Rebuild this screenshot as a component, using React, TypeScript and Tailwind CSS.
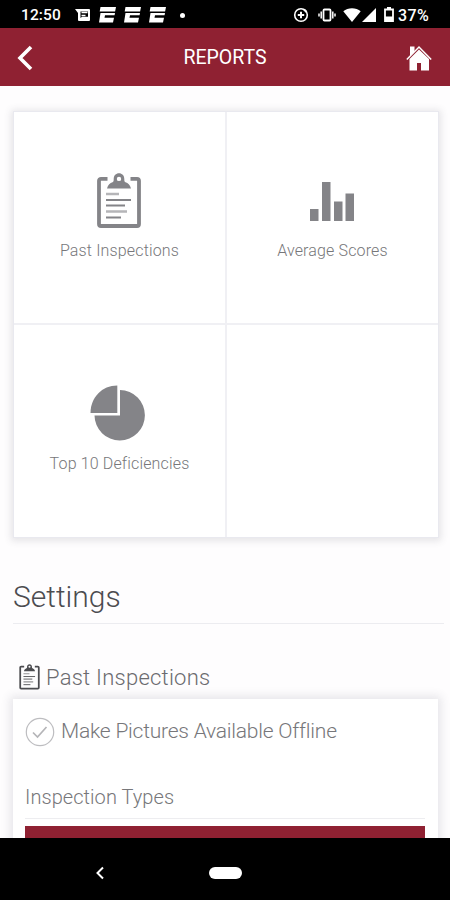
import type { ReactNode } from 'react';

function ClipboardIcon({ className }: { className?: string }) {
  return (
    <svg viewBox="0 0 44 56" fill="none" className={className}>
      <path d="M10.500 5.800H4a2 2 0 0 0-2 2V51a2 2 0 0 0 2 2h36a2 2 0 0 0 2-2V7.800a2 2 0 0 0-2-2h-6.500" stroke="currentColor" strokeWidth="3.800" />
      <path
        fill="currentColor"
        fillRule="evenodd"
        d="M10 15.500c1-3.700 3-5.200 5.500-6.200 1.200-.8 1.200-1.800 1.200-3.300C16.700 2.500 19 .3 22 .3S27.300 2.500 27.300 6c0 1.500 0 2.500 1.200 3.300 2.500 1 4.500 2.500 5.500 6.200ZM22 3.700a2.200 2.200 0 1 0 0 4.400 2.200 2.200 0 0 0 0-4.400Z"
      />
      <path d="M9 27h25M9 32.500h19M9 44.500h15" stroke="currentColor" strokeWidth="1.900" />
      <path d="M9 21h13M9 38.500h21" stroke="currentColor" strokeWidth="2.400" opacity=".6" />
    </svg>
  );
}

function BarsIcon() {
  return (
    <svg viewBox="0 0 44 40" fill="currentColor" className="h-[40px] w-[44px]">
      <path d="M0 28h8.500v12H0zM12 1h8.500v39H12zM24 20.500h8.500V40H24zM35.500 12.500H44V40h-8.500z" />
    </svg>
  );
}

function PieIcon() {
  return (
    <svg viewBox="0 0 56 56" fill="currentColor" className="mr-[2px] mb-[3px] h-[56px] w-[56px]">
      <path d="M27.300.5V28H.5C.5 12.500 12 .5 27.300.5Z" />
      <path d="M30 5v25.500H4.500A25.200 25.200 0 1 0 30 5Z" />
    </svg>
  );
}

function NoticeIcon() {
  return (
    <svg viewBox="0 0 16 12" className="h-[12px] w-[16px]">
      <path d="M6.500 3.500h6M6.500 6.500h4" stroke="#fff" strokeWidth="1.400" />
      <path
        fill="#fff"
        fillRule="evenodd"
        d="M0 0h14a1 1 0 0 1 1 1v10a1 1 0 0 1-1 1H4a1 1 0 0 1-1-1V4Zm5.500 2.500v6.500L7 7.800h6V2.500Z"
      />
    </svg>
  );
}

function EIcon() {
  return (
    <svg viewBox="0 0 17 16" fill="#fff" className="h-[16px] w-[17px]">
      <path d="M1.500 0H17l-.9 4.500H.7zM1.500 6H16l-.4 2.200H6l-.5 2.500H15l-1 4.800H0z" />
    </svg>
  );
}

function StatusBar() {
  return (
    <div className="flex h-[28px] shrink-0 items-center bg-black pt-[2px] pl-[21px] text-white">
      <span className="mt-px w-[54px] text-[15.500px] font-medium tracking-[0.1px]">12:50</span>
      <NoticeIcon />
      <div className="ml-[8px] flex gap-[8px]">
        <EIcon />
        <EIcon />
        <EIcon />
      </div>
      <span className="ml-[14px] h-[5px] w-[5px] rounded-full bg-white" />
      <svg viewBox="0 0 16 16" fill="none" stroke="#fff" className="ml-[108px] h-[16px] w-[16px]">
        <circle cx="8" cy="8" r="6.300" strokeWidth="1.600" />
        <path d="M8 4.800v6.400M4.800 8h6.400" strokeWidth="2" />
        <path d="M11 2.500l2.500 2.500" strokeWidth="2" />
      </svg>
      <svg viewBox="0 0 18 14" className="ml-[9px] h-[14px] w-[18px]">
        <rect x="5.500" y="1.500" width="7" height="11" rx="1" fill="none" stroke="#fff" strokeWidth="1.800" />
        <path d="M3.200 3.500v7M14.800 3.500v7M1 5.500v3M17 5.500v3" stroke="#fff" strokeWidth="1.500" />
      </svg>
      <svg viewBox="0 0 18 14" fill="#fff" className="ml-[7px] h-[14px] w-[18px]">
        <path d="M9 14 .3 3.200C5 -.7 13 -.7 17.700 3.200Z" />
      </svg>
      <svg viewBox="0 0 14 14" fill="#fff" className="ml-[1px] h-[14px] w-[14px]">
        <path d="M14 0v14H0z" />
      </svg>
      <svg viewBox="0 0 10 15" className="mb-px ml-[8px] h-[15px] w-[10px]">
        <path d="M1 2.500h8V14H1z" fill="none" stroke="#fff" strokeWidth="1.800" />
        <path d="M3 0h4v2H3zM1 9.500h8V14H1z" fill="#fff" />
      </svg>
      <span className="mt-px ml-[4px] text-[16px] font-medium tracking-[0.4px]">37%</span>
    </div>
  );
}

function Tile({ icon, label, className = '' }: { icon?: ReactNode; label?: string; className?: string }) {
  return (
    <div className={`flex flex-col items-center border-[#f0f0f4] text-[#848488] ${className}`}>
      <div className="mt-[60px] mr-[2px] flex h-[58px] items-center justify-center">{icon}</div>
      <span className="mt-[11px] text-[16px] leading-[20px] font-light tracking-[0.15px] text-[#77777a]">{label}</span>
    </div>
  );
}

export default function App() {
  return (
    <div className="flex h-[900px] w-[450px] flex-col overflow-hidden bg-[#fefdfe] font-['Roboto',sans-serif]">
      <StatusBar />

      <header className="flex h-[58px] shrink-0 items-center justify-between bg-[#8f2132] pr-[18px] pl-[17px] text-white">
        <svg viewBox="0 0 16 26" fill="none" stroke="#fff" strokeWidth="3.600" className="mt-[2px] h-[26px] w-[16px]">
          <path d="M14 2 3 13l11 11" />
        </svg>
        <h1 className="mt-[2px] ml-[11px] text-[19.500px]">REPORTS</h1>
        <svg viewBox="0 0 26 26" fill="#fff" className="mt-[2px] h-[26px] w-[26px]">
          <path d="M4 1.500h4.500v5L4 11zM13 4.500l10 9.500V25.500h-8V18h-4v7.500H3.500V14Z" />
          <path d="M.8 14.500 13 2l12.200 12.500" fill="none" stroke="#fff" strokeWidth="1.500" />
        </svg>
      </header>

      <main className="min-h-0 flex-1 overflow-hidden px-[13px] pt-[25px]">
        <section className="grid h-[427px] w-[426px] grid-cols-[213px_1fr] grid-rows-[213px_1fr] border border-[#e9e9ef] bg-white shadow-[0_1px_7px_2px_rgba(60,60,80,0.13)]">
          <Tile
            className="border-r-2 border-b-2"
            icon={<ClipboardIcon className="h-[56px] w-[44px]" />}
            label="Past Inspections"
          />
          <Tile className="border-b-2" icon={<BarsIcon />} label="Average Scores" />
          <Tile className="border-r-2" icon={<PieIcon />} label="Top 10 Deficiencies" />
          <Tile />
        </section>

        <h2 className="mt-[39px] -mr-[7px] h-[47px] border-b border-[#ececf0] text-[30px] leading-[40px] font-light text-[#4c4c50]">
          Settings
        </h2>

        <div className="mt-[35px] mb-[4px] flex h-[36px] items-center pl-[6px] text-[#4c4c50]">
          <ClipboardIcon className="h-[26px] w-[21px]" />
          <h3 className="ml-[6px] text-[22px] font-light tracking-[0.25px] text-[#6b6b6f]">Past Inspections</h3>
        </div>

        <section className="h-[200px] w-[425px] bg-white pt-[18px] pr-[13px] pl-[12px] text-[#77777a] shadow-[0_0_9px_3px_rgba(60,60,80,0.12)]">
          <label className="flex h-[30px] items-center">
            <svg viewBox="0 0 30 30" fill="none" className="h-[30px] w-[30px]">
              <circle cx="15" cy="15" r="13.700" stroke="#bdbdc0" strokeWidth="1.200" />
              <path d="m8 15.500 4.500 4.500L21.500 10" stroke="#b5b5b8" strokeWidth="1.700" />
            </svg>
            <span className="ml-[6px] text-[21px] font-light tracking-[-0.22px]">Make Pictures Available Offline</span>
          </label>
          <h4 className="mt-[34px] h-[38px] border-b border-[#ededf0] text-[20px] leading-[32px] font-light tracking-[0.06px]">
            Inspection Types
          </h4>
          <div className="mt-[7px] h-[60px] bg-[#8f2132]" />
        </section>
      </main>

      <nav className="flex h-[62px] shrink-0 items-center bg-black pt-[8px] pl-[95px]">
        <svg viewBox="0 0 10 14" fill="none" stroke="#fff" strokeWidth="2" className="h-[14px] w-[10px]">
          <path d="M8 1.500 2.500 7 8 12.500" />
        </svg>
        <span className="ml-[104px] h-[12px] w-[33px] rounded-full bg-white" />
      </nav>
    </div>
  );
}
